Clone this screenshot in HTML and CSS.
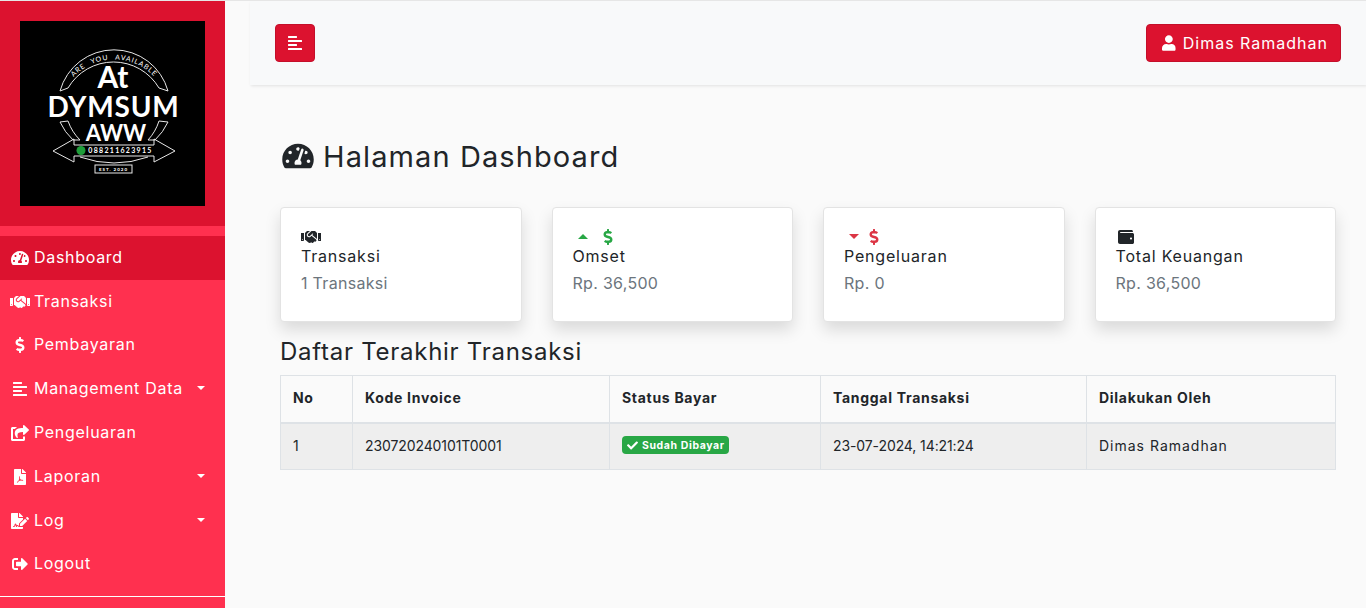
FILE: index.html
```html
<!DOCTYPE html>
<html lang="id">
<head>
    <meta charset="UTF-8">
    <meta name="viewport" content="width=device-width, initial-scale=1.0">
    <title>Halaman Dashboard</title>
    <link rel="stylesheet" href="styles.css">
</head>
<body>
    <svg class="icon-defs" width="0" height="0">
        <symbol id="i-gauge" viewBox="0 0 576 512"><path d="M288 32C128.94 32 0 160.94 0 320c0 52.8 14.25 102.26 39.06 144.8 5.61 9.62 16.3 15.2 27.44 15.2h443c11.14 0 21.83-5.58 27.44-15.2C561.75 422.26 576 372.8 576 320c0-159.06-128.94-288-288-288zm0 64c14.71 0 26.58 10.13 30.32 23.65-1.11 2.26-2.64 4.23-3.42 6.65l-9.22 27.67c-5.13 3.49-10.97 6.01-17.68 6.01-17.67 0-32-14.33-32-32S270.33 96 288 96zM96 384c-17.67 0-32-14.33-32-32s14.33-32 32-32 32 14.33 32 32-14.33 32-32 32zm48-160c-17.67 0-32-14.33-32-32s14.33-32 32-32 32 14.33 32 32-14.33 32-32 32zm246.77-72.41l-61.33 184C343.13 347.33 352 364.54 352 384c0 11.72-3.38 22.55-8.88 32H232.88c-5.5-9.45-8.88-20.28-8.88-32 0-33.94 26.5-61.43 59.9-63.59l61.34-184.01c4.17-12.56 17.73-19.45 30.36-15.17 12.57 4.19 19.35 17.79 15.17 30.36zm14.66 57.2l15.52-46.55c3.47-1.29 7.13-2.23 11.05-2.23 17.67 0 32 14.33 32 32s-14.33 32-32 32c-11.38-.01-20.89-6.28-26.57-15.22zM480 384c-17.67 0-32-14.33-32-32s14.33-32 32-32 32 14.33 32 32-14.33 32-32 32z"/></symbol>
        <symbol id="i-hands" viewBox="0 0 640 512"><path d="M434.7 64h-85.9c-8 0-15.7 3-21.6 8.4l-98.3 90c-.1.1-.2.3-.3.4-16.6 15.6-16.3 40.5-2.1 56 12.7 13.9 39.4 17.6 56.1 2.7.1-.1.3-.1.4-.2l79.9-73.2c6.5-5.9 16.7-5.5 22.6 1 6 6.5 5.5 16.6-1 22.6l-26.1 23.9L504 313.8c2.9 2.4 5.5 5 7.9 7.7V128l-54.6-54.6c-5.9-6-14.1-9.4-22.6-9.4zM544 128.2v223.9c0 17.7 14.3 32 32 32h64V128.2h-96zm48 223.9c-8.8 0-16-7.2-16-16s7.2-16 16-16 16 7.2 16 16-7.2 16-16 16zM0 384h64c17.7 0 32-14.3 32-32V128.2H0V384zm48-63.9c8.8 0 16 7.2 16 16s-7.2 16-16 16-16-7.2-16-16c0-8.9 7.2-16 16-16zm435.9 18.6L334.6 217.5l-30 27.5c-29.7 27.1-75.2 24.5-101.7-4.4-26.9-29.4-24.8-74.9 4.4-101.7L289.1 64h-83.8c-8.5 0-16.6 3.4-22.6 9.4L128 128v223.9h18.3l90.5 81.9c27.4 22.3 67.7 18.1 90-9.3l.2-.2 17.9 15.5c15.9 13 39.4 10.5 52.3-5.4l31.4-38.6 5.4 4.4c13.7 11.1 33.9 9.1 45-4.7l9.5-11.7c11.2-13.8 9.1-33.9-4.6-45.1z"/></symbol>
        <symbol id="i-dollar" viewBox="0 0 288 512"><path d="M209.2 233.4l-108-31.6C88.7 198.2 80 186.5 80 173.5c0-16.3 13.2-29.5 29.5-29.5h66.3c12.2 0 24.2 3.7 34.2 10.5 6.1 4.1 14.3 3.1 19.5-2l34.8-34c7.1-6.9 6.1-18.4-1.8-24.5C238 74.8 207.4 64.1 176 64V16c0-8.8-7.2-16-16-16h-32c-8.8 0-16 7.2-16 16v48h-2.5C45.8 64-5.4 118.7.5 183.6c4.2 46.1 39.4 83.6 83.8 96.6l102.5 30c12.5 3.7 21.2 15.3 21.2 28.3 0 16.3-13.2 29.5-29.5 29.5h-66.3C100 368 88 364.3 78 357.5c-6.1-4.1-14.3-3.1-19.5 2l-34.8 34c-7.1 6.9-6.1 18.4 1.8 24.5 24.5 19.2 55.1 29.9 86.5 30v48c0 8.8 7.2 16 16 16h32c8.8 0 16-7.2 16-16v-48.2c46.6-.9 90.3-28.6 105.7-72.7 21.5-61.6-14.6-124.8-72.5-141.7z"/></symbol>
        <symbol id="i-align" viewBox="0 0 448 512"><path d="M12.83 352h262.34A12.82 12.82 0 0 0 288 339.17v-38.34A12.82 12.82 0 0 0 275.17 288H12.83A12.82 12.82 0 0 0 0 300.83v38.34A12.82 12.82 0 0 0 12.83 352zm0-256h262.34A12.82 12.82 0 0 0 288 83.17V44.83A12.82 12.82 0 0 0 275.17 32H12.83A12.82 12.82 0 0 0 0 44.83v38.34A12.82 12.82 0 0 0 12.83 96zM432 160H16a16 16 0 0 0-16 16v32a16 16 0 0 0 16 16h416a16 16 0 0 0 16-16v-32a16 16 0 0 0-16-16zm0 256H16a16 16 0 0 0-16 16v32a16 16 0 0 0 16 16h416a16 16 0 0 0 16-16v-32a16 16 0 0 0-16-16z"/></symbol>
        <symbol id="i-share" viewBox="0 0 576 512"><path d="M568.482 177.448L424.479 313.433C409.3 327.768 384 317.14 384 295.985v-71.963c-144.575.97-205.566 35.113-164.775 171.353 4.483 14.973-12.846 26.567-25.006 17.33C155.252 383.105 120 326.488 120 269.339c0-143.937 117.599-172.5 264-173.312V24.012c0-21.174 25.317-31.768 40.479-17.448l144.003 136c10.02 9.463 10.028 25.425 0 34.884zM384 379.128V448H64V128h50.916a11.99 11.99 0 0 0 8.648-3.693c14.953-15.568 32.237-27.89 51.014-37.676C186.708 80.369 182.213 64 168.536 64H48C21.49 64 0 85.49 0 112v352c0 26.51 21.49 48 48 48h352c26.51 0 48-21.49 48-48v-88.806c0-8.288-8.197-13.066-15.823-10.377-10.5 3.706-21.882 5.13-32.7 3.3-5.77-.976-15.477 3.45-15.477 9.011z"/></symbol>
        <symbol id="i-pdf" viewBox="0 0 384 512"><path fill-rule="evenodd" d="M224 136V0H24C10.7 0 0 10.7 0 24v464c0 13.3 10.7 24 24 24h336c13.3 0 24-10.7 24-24V160H248c-13.2 0-24-10.8-24-24zM176 230c14 0 16 16 8 60 14 30 30 48 50 54 26-4 60-2 60 20 0 18-28 18-66 0-24 4-50 12-72 20-26 46-44 58-58 50-12-10-2-32 38-52 12-22 22-46 30-72-10-36-8-80 10-80zM384 121.9V128H256V0h6.1c6.4 0 12.5 2.5 17 7l97.9 98c4.5 4.5 7 10.6 7 16.9z"/></symbol>
        <symbol id="i-sign" viewBox="0 0 576 512"><path d="M218.17 424.14c-2.95-5.92-8.09-6.52-10.17-6.52s-7.22.59-10.02 6.19l-7.67 15.34c-6.37 12.78-25.03 11.37-29.48-2.09L144 386.59l-10.61 31.88c-5.89 17.66-22.38 29.53-41 29.53H80c-8.84 0-16-7.16-16-16s7.16-16 16-16h12.39c4.83 0 9.11-3.08 10.64-7.66l18.19-54.64c3.3-9.81 12.44-16.41 22.78-16.41s19.48 6.59 22.77 16.41l13.88 41.64c19.77-16.19 54.05-9.7 66 14.16 2.02 4.06 5.96 6.5 10.16 6.85V335.3l128-127.11V160H248c-13.2 0-24-10.8-24-24V0H24C10.7 0 0 10.7 0 24v464c0 13.3 10.7 24 24 24h336c13.3 0 24-10.7 24-24v-40l-128-.11c-16.12-.31-30.58-9.28-37.83-23.75zM384 121.9c0-6.3-2.5-12.4-7-16.9L279.1 7c-4.5-4.5-10.6-7-17-7H256v128h128v-6.1zm-96 225.06V416h68.99l161.68-162.78-67.88-67.88L288 346.96zm280.54-179.63l-31.87-31.87c-9.94-9.94-26.07-9.94-36.01 0l-27.25 27.25 67.88 67.88 27.25-27.25c9.95-9.94 9.95-26.07 0-36.01z"/></symbol>
        <symbol id="i-out" viewBox="0 0 512 512"><path d="M497 273L329 441c-15 15-41 4.5-41-17v-96H152c-13.3 0-24-10.7-24-24v-96c0-13.3 10.7-24 24-24h136V88c0-21.4 25.9-32 41-17l168 168c9.3 9.4 9.3 24.6 0 34zM192 436v-40c0-6.6-5.4-12-12-12H96c-17.7 0-32-14.3-32-32V160c0-17.7 14.3-32 32-32h84c6.6 0 12-5.4 12-12V76c0-6.6-5.4-12-12-12H96c-53 0-96 43-96 96v192c0 53 43 96 96 96h84c6.6 0 12-5.4 12-12z"/></symbol>
        <symbol id="i-user" viewBox="0 0 448 512"><path d="M224 256c70.7 0 128-57.3 128-128S294.7 0 224 0 96 57.3 96 128s57.3 128 128 128zm89.6 32h-16.7c-22.2 10.2-46.9 16-72.9 16s-50.6-5.8-72.9-16h-16.7C60.2 288 0 348.2 0 422.4V464c0 26.5 21.5 48 48 48h352c26.5 0 48-21.5 48-48v-41.6c0-74.2-60.2-134.4-134.4-134.4z"/></symbol>
        <symbol id="i-wallet" viewBox="0 0 512 512"><path d="M461.2 128H80c-8.84 0-16-7.16-16-16s7.16-16 16-16h384c8.84 0 16-7.16 16-16 0-26.51-21.49-48-48-48H64C28.65 32 0 60.65 0 96v320c0 35.35 28.65 64 64 64h397.2c28.02 0 50.8-21.53 50.8-48V176c0-26.47-22.78-48-50.8-48zM416 336c-17.67 0-32-14.33-32-32s14.33-32 32-32 32 14.33 32 32-14.33 32-32 32z"/></symbol>
        <symbol id="i-check" viewBox="0 0 512 512"><path d="M173.898 439.404l-166.4-166.4c-9.997-9.997-9.997-26.206 0-36.204l36.203-36.204c9.997-9.998 26.207-9.998 36.204 0L192 312.69 432.095 72.596c9.997-9.997 26.207-9.997 36.204 0l36.203 36.204c9.997 9.997 9.997 26.206 0 36.204l-294.4 294.401c-9.998 9.997-26.207 9.997-36.204-.001z"/></symbol>
    </svg>

    <div class="wrapper">
        <nav class="sidebar">
            <div class="sidebar-header">
                <svg class="logo" viewBox="0 0 185 185">
                    <rect width="185" height="185" fill="#000"/>
                    <defs><path id="logo-arc" d="M44 70A55.4 55.4 0 0 1 144 70"/></defs>
                    <g fill="none" stroke="#e8e8e8" stroke-width="1">
                        <path d="M40 70A56 56 0 0 1 148 70L139 67A52.8 52.8 0 0 0 48 67Z"/>
                        <path d="M40 101A58 58 0 0 0 53 119H60A50 50 0 0 1 48 100Z"/>
                        <path d="M148 101A58 58 0 0 1 135 119H128A50 50 0 0 0 139 100Z"/>
                        <path d="M33 130L54 118V124H134V118L155 130L134 141V135H54V141Z"/>
                        <path d="M60 136Q94 148 128 136"/>
                        <rect x="75" y="144" width="37" height="8"/>
                    </g>
                    <text class="logo-arc-text"><textPath href="#logo-arc" startOffset="50%" text-anchor="middle">ARE YOU AVAILABLE</textPath></text>
                    <text class="logo-at" x="93" y="67" text-anchor="middle">At</text>
                    <text class="logo-name" x="93.5" y="96" text-anchor="middle">DYMSUM</text>
                    <text class="logo-aww" x="96" y="120" text-anchor="middle">AWW</text>
                    <circle cx="61" cy="129.5" r="4.5" fill="#1f9e3a"/>
                    <text class="logo-phone" x="100.5" y="132" text-anchor="middle">088211623915</text>
                    <text class="logo-est" x="93.5" y="150" text-anchor="middle">EST. 2020</text>
                </svg>
            </div>
            <ul class="menu">
                <li class="menu-item active"><svg class="menu-icon"><use href="#i-gauge"/></svg><span>Dashboard</span></li>
                <li class="menu-item"><svg class="menu-icon"><use href="#i-hands"/></svg><span>Transaksi</span></li>
                <li class="menu-item"><svg class="menu-icon"><use href="#i-dollar"/></svg><span>Pembayaran</span></li>
                <li class="menu-item"><svg class="menu-icon"><use href="#i-align"/></svg><span>Management Data</span><i class="caret"></i></li>
                <li class="menu-item"><svg class="menu-icon"><use href="#i-share"/></svg><span>Pengeluaran</span></li>
                <li class="menu-item"><svg class="menu-icon"><use href="#i-pdf"/></svg><span>Laporan</span><i class="caret"></i></li>
                <li class="menu-item"><svg class="menu-icon"><use href="#i-sign"/></svg><span>Log</span><i class="caret"></i></li>
                <li class="menu-item"><svg class="menu-icon"><use href="#i-out"/></svg><span>Logout</span></li>
            </ul>
            <div class="sidebar-line"></div>
        </nav>

        <div class="main">
            <header class="topbar">
                <button class="btn btn-toggle"><svg class="toggle-icon"><use href="#i-align"/></svg></button>
                <button class="btn btn-user"><svg class="user-icon"><use href="#i-user"/></svg>Dimas Ramadhan</button>
            </header>

            <div class="content">
                <h1 class="page-title"><svg class="title-icon"><use href="#i-gauge"/></svg>Halaman Dashboard</h1>

                <div class="cards">
                    <div class="card">
                        <div class="card-icons"><svg class="ic-hands"><use href="#i-hands"/></svg></div>
                        <div class="card-title">Transaksi</div>
                        <div class="card-value">1 Transaksi</div>
                    </div>
                    <div class="card">
                        <div class="card-icons green"><i class="tri-up"></i><svg class="ic-dollar"><use href="#i-dollar"/></svg></div>
                        <div class="card-title">Omset</div>
                        <div class="card-value">Rp. 36,500</div>
                    </div>
                    <div class="card">
                        <div class="card-icons red"><i class="tri-down"></i><svg class="ic-dollar"><use href="#i-dollar"/></svg></div>
                        <div class="card-title">Pengeluaran</div>
                        <div class="card-value">Rp. 0</div>
                    </div>
                    <div class="card">
                        <div class="card-icons"><svg class="ic-wallet"><use href="#i-wallet"/></svg></div>
                        <div class="card-title">Total Keuangan</div>
                        <div class="card-value">Rp. 36,500</div>
                    </div>
                </div>

                <h2 class="section-title">Daftar Terakhir Transaksi</h2>
                <table class="table">
                    <thead>
                        <tr>
                            <th class="col-no">No</th>
                            <th class="col-kode">Kode Invoice</th>
                            <th class="col-status">Status Bayar</th>
                            <th class="col-tanggal">Tanggal Transaksi</th>
                            <th>Dilakukan Oleh</th>
                        </tr>
                    </thead>
                    <tbody>
                        <tr>
                            <td class="num">1</td>
                            <td class="num">230720240101T0001</td>
                            <td><span class="badge"><svg class="badge-icon"><use href="#i-check"/></svg>Sudah Dibayar</span></td>
                            <td class="num">23-07-2024, 14:21:24</td>
                            <td>Dimas Ramadhan</td>
                        </tr>
                    </tbody>
                </table>
            </div>
        </div>
    </div>
</body>
</html>
```

FILE: styles.css
```css
* {
    box-sizing: border-box;
}
html, body {
    height: 100%;
}
body {
    margin: 0;
    border-top: 1px solid #e6e6e6;
    background-color: #fafafa;
    color: #212529;
    font-family: Inter, "Open Sans", sans-serif;
    font-size: 16px;
    overflow: hidden;
}
.icon-defs {
    position: absolute;
}
svg {
    fill: currentColor;
}
.wrapper {
    display: flex;
    height: 607px;
}

/* sidebar */
.sidebar {
    width: 225px;
    flex: none;
    background-color: #ff304f;
    color: #fff;
}
.sidebar-header {
    height: 225px;
    padding: 20px;
    background-color: #dc122f;
}
.logo {
    display: block;
    width: 185px;
    height: 185px;
}
.logo text {
    fill: #fff;
    font-family: Lato, sans-serif;
    font-weight: 700;
}
.logo .logo-arc-text {
    font-size: 7px;
    font-weight: 400;
    letter-spacing: .9px;
    word-spacing: 4px;
}
.logo .logo-at {
    font-size: 30px;
}
.logo .logo-name {
    font-size: 28px;
    letter-spacing: .8px;
}
.logo .logo-aww {
    font-size: 22px;
}
.logo .logo-phone {
    font-size: 7px;
    letter-spacing: 1.3px;
}
.logo .logo-est {
    font-size: 4.5px;
    letter-spacing: 1px;
}
.menu {
    list-style: none;
    margin: 10px 0 0;
    padding: 0;
}
.menu-item {
    display: flex;
    align-items: center;
    height: 43.8px;
    padding-bottom: 2px;
    font-size: 16px;
    letter-spacing: .7px;
}
.menu-icon {
    width: 20px;
    height: 16px;
    margin: 2px 4px 0 10px;
    flex: none;
}
.menu-item.active {
    background-color: #dc122f;
}
.caret {
    margin-left: auto;
    margin-right: 20px;
    border-top: 4.5px solid #fff;
    border-left: 4.5px solid transparent;
    border-right: 4.5px solid transparent;
}
.sidebar-line {
    margin-top: 10px;
    border-top: 1px solid #fff;
}

/* topbar */
.main {
    flex: 1;
    min-width: 0;
}
.topbar {
    display: flex;
    justify-content: space-between;
    align-items: center;
    height: 84px;
    margin-left: 25px;
    padding: 0 25px;
    background-color: #f8f9fa;
    box-shadow: 1px 1px 3px rgba(0, 0, 0, .1);
}
.btn {
    display: flex;
    align-items: center;
    height: 38px;
    border: 1px solid #c40f2a;
    border-radius: 4px;
    background-color: #dc122f;
    color: #fff;
    font-family: inherit;
    font-size: 16px;
}
.btn-toggle {
    justify-content: center;
    width: 40px;
    padding: 0;
}
.toggle-icon {
    width: 14px;
    height: 16px;
}
.btn-user {
    width: 195px;
    padding: 0 12px 0 15px;
    letter-spacing: 1px;
    white-space: nowrap;
}
.user-icon {
    width: 14px;
    height: 16px;
    margin-right: 7px;
}

/* content */
.content {
    padding: 0 30px 0 55px;
}
.page-title {
    display: flex;
    align-items: center;
    height: 48px;
    margin: 47px 0 27px;
    font-size: 29px;
    font-weight: 400;
    letter-spacing: 1.1px;
}
.title-icon {
    width: 32px;
    height: 28px;
    margin: 0 9px 0 2px;
}
.cards {
    display: grid;
    grid-template-columns: repeat(4, 1fr);
    gap: 30px;
}
.card {
    height: 115px;
    padding: 21px 20px;
    border: 1px solid #e3e3e3;
    border-radius: 4px;
    background: #fff;
    box-shadow: 0 8px 16px rgba(0, 0, 0, .13);
}
.card-icons {
    display: flex;
    align-items: center;
    height: 15px;
}
.green {
    color: #28a745;
}
.red {
    color: #dc3545;
}
.tri-up, .tri-down {
    margin: 0 15px 0 5px;
    border-left: 5px solid transparent;
    border-right: 5px solid transparent;
}
.tri-up {
    border-bottom: 5px solid #28a745;
}
.tri-down {
    margin-right: 10px;
    border-top: 5px solid #dc3545;
}
.ic-hands {
    width: 20px;
    height: 16px;
}
.ic-dollar {
    width: 10px;
    height: 16px;
}
.ic-wallet {
    width: 16px;
    height: 16px;
    margin-left: 2px;
}
.card-title {
    line-height: 24px;
    letter-spacing: .8px;
}
.card-value {
    margin-top: 3px;
    line-height: 24px;
    color: #6c757d;
    letter-spacing: .3px;
}
.section-title {
    margin: 14px 0 7px;
    font-size: 24px;
    line-height: 32px;
    font-weight: 400;
    letter-spacing: .73px;
}
.table {
    width: 100%;
    border-collapse: collapse;
    table-layout: fixed;
    font-size: 14px;
}
.table th, .table td {
    padding: 0 12px 2px;
    border: 1px solid #dee2e6;
    text-align: left;
}
.table th {
    height: 47px;
    border-bottom-width: 2px;
    font-weight: 700;
    letter-spacing: .7px;
}
.table td {
    height: 47px;
    background-color: #eee;
    letter-spacing: 1px;
}
.table td.num {
    letter-spacing: -.1px;
}
.col-no {
    width: 72px;
}
.col-kode {
    width: 257px;
}
.col-status {
    width: 211px;
}
.col-tanggal {
    width: 266px;
}
.badge {
    display: inline-flex;
    align-items: center;
    height: 18px;
    padding: 0 4px 0 5px;
    border-radius: 4px;
    background-color: #28a745;
    color: #fff;
    font-size: 10.5px;
    font-weight: 700;
    letter-spacing: .6px;
}
.badge-icon {
    width: 11px;
    height: 11px;
    margin-right: 4px;
}
```
